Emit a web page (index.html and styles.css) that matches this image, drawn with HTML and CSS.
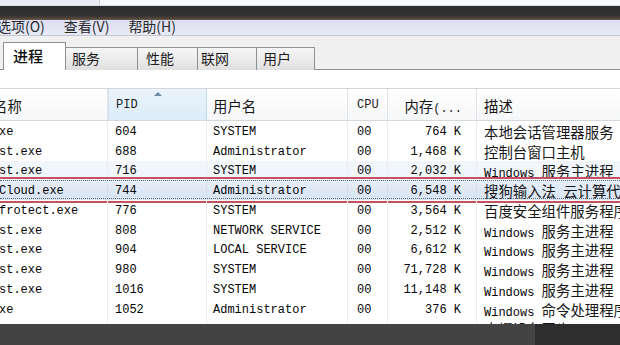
FILE: index.html
```html
<!DOCTYPE html>
<html lang="zh-CN">
<head>
<meta charset="utf-8">
<title>任务管理器</title>
<link rel="stylesheet" href="styles.css">
</head>
<body>
<div class="screen">
  <div class="topstrip"><div class="topbox"></div></div>
  <div class="darkband"></div>
  <div class="window">
    <div class="menubar">
      <span class="menu">选项(O)</span>
      <span class="menu">查看(V)</span>
      <span class="menu">帮助(H)</span>
    </div>
    <div class="tabstrip">
      <div class="tab tab-active tab-proc">进程</div>
      <div class="tab tab-svc">服务</div>
      <div class="tab tab-perf">性能</div>
      <div class="tab tab-net">联网</div>
      <div class="tab tab-user">用户</div>
    </div>
    <div class="panel">
      <div class="listview">
        <div class="lv-head">
          <div class="h h-name"><span class="zh">名称</span></div>
          <div class="h h-pid sorted">PID<span class="sort-arrow"></span></div>
          <div class="h h-user"><span class="zh">用户名</span></div>
          <div class="h h-cpu">CPU</div>
          <div class="h h-mem"><span class="zh">内存</span>(...</div>
          <div class="h h-desc"><span class="zh">描述</span></div>
        </div>

        <div class="row">
          <div class="c c-name">xe</div><div class="c c-pid">604</div><div class="c c-user">SYSTEM</div><div class="c c-cpu">00</div><div class="c c-mem">764 K</div><div class="c c-desc"><span class="zh">本地会话管理器服务</span></div>
        </div>
        <div class="row">
          <div class="c c-name">st.exe</div><div class="c c-pid">688</div><div class="c c-user">Administrator</div><div class="c c-cpu">00</div><div class="c c-mem">1,468 K</div><div class="c c-desc"><span class="zh">控制台窗口主机</span></div>
        </div>
        <div class="row row-hover">
          <div class="c c-name">st.exe</div><div class="c c-pid">716</div><div class="c c-user">SYSTEM</div><div class="c c-cpu">00</div><div class="c c-mem">2,032 K</div><div class="c c-desc">Windows <span class="zh">服务主进程</span></div>
        </div>
        <div class="row row-selected">
          <div class="c c-name">Cloud.exe</div><div class="c c-pid">744</div><div class="c c-user">Administrator</div><div class="c c-cpu">00</div><div class="c c-mem">6,548 K</div><div class="c c-desc"><span class="zh">搜狗输入法</span> <span class="zh">云计算代理</span></div>
          <div class="mark"></div>
        </div>
        <div class="row">
          <div class="c c-name">frotect.exe</div><div class="c c-pid">776</div><div class="c c-user">SYSTEM</div><div class="c c-cpu">00</div><div class="c c-mem">3,564 K</div><div class="c c-desc"><span class="zh">百度安全组件服务程序</span></div>
        </div>
        <div class="row">
          <div class="c c-name">st.exe</div><div class="c c-pid">808</div><div class="c c-user">NETWORK SERVICE</div><div class="c c-cpu">00</div><div class="c c-mem">2,512 K</div><div class="c c-desc">Windows <span class="zh">服务主进程</span></div>
        </div>
        <div class="row">
          <div class="c c-name">st.exe</div><div class="c c-pid">904</div><div class="c c-user">LOCAL SERVICE</div><div class="c c-cpu">00</div><div class="c c-mem">6,612 K</div><div class="c c-desc">Windows <span class="zh">服务主进程</span></div>
        </div>
        <div class="row">
          <div class="c c-name">st.exe</div><div class="c c-pid">980</div><div class="c c-user">SYSTEM</div><div class="c c-cpu">00</div><div class="c c-mem">71,728 K</div><div class="c c-desc">Windows <span class="zh">服务主进程</span></div>
        </div>
        <div class="row">
          <div class="c c-name">st.exe</div><div class="c c-pid">1016</div><div class="c c-user">SYSTEM</div><div class="c c-cpu">00</div><div class="c c-mem">11,148 K</div><div class="c c-desc">Windows <span class="zh">服务主进程</span></div>
        </div>
        <div class="row">
          <div class="c c-name">xe</div><div class="c c-pid">1052</div><div class="c c-user">Administrator</div><div class="c c-cpu">00</div><div class="c c-mem">376 K</div><div class="c c-desc">Windows <span class="zh">命令处理程序</span></div>
        </div>
        <div class="row">
          <div class="c c-name"></div><div class="c c-pid"></div><div class="c c-user"></div><div class="c c-cpu"></div><div class="c c-mem"></div><div class="c c-desc"><span class="zh">索爆设备同步</span></div>
        </div>
      </div>
    </div>
  </div>
  <div class="taskbar"><div class="tb-left"></div><div class="tb-right"></div></div>
</div>
</body>
</html>
```

FILE: styles.css
```css
* { box-sizing: border-box; }

html, body {
  margin: 0;
  padding: 0;
  background: #ffffff;
}

.screen {
  width: 620px;
  height: 345px;
  overflow: hidden;
  display: flex;
  flex-direction: column;
  font-family: "Liberation Mono", "Noto Sans CJK SC", monospace;
  font-size: 12px;
  color: #050505;
}

.zh {
  font-family: "Noto Sans CJK SC", sans-serif;
  font-size: 14.4px;
  color: #161616;
}

/* top strip of the window behind */
.topstrip {
  height: 6px;
  flex: 0 0 6px;
  background: #f6f8fb;
  border-bottom: 1px solid #d7e0ea;
  display: flex;
}
.topbox {
  width: 100px;
  background: #e9eef4;
  border-right: 1px solid #c9d3de;
}

.darkband {
  height: 14px;
  flex: 0 0 14px;
  background: linear-gradient(#2c2c2c, #323232 65%, #4a4038 85%, #6a5a4a 100%);
}

.window {
  height: 304px;
  flex: 0 0 304px;
  overflow: hidden;
  display: flex;
  flex-direction: column;
}

.menubar {
  height: 16px;
  flex: 0 0 16px;
  background: linear-gradient(#dcdff0, #e8eaf6);
  border-bottom: 1px solid #c4c7d2;
  overflow: hidden;
  display: flex;
  gap: 19px;
}
.menu {
  font-family: "Noto Sans CJK SC", sans-serif;
  font-size: 14px;
  line-height: 14px;
  margin-top: -1px;
  color: #2a2a2a;
}
.menu:first-child { margin-left: -3px; }

.tabstrip {
  height: 34px;
  flex: 0 0 34px;
  background: #f0f0f0;
  border-bottom: 1px solid #8e9097;
  display: flex;
  align-items: flex-end;
  padding-left: 3px;
}
.tab {
  height: 23px;
  margin-bottom: -1px;
  border: 1px solid #8e9097;
  border-bottom: none;
  background: linear-gradient(#f6f6f6, #ebebeb 55%, #dfdfdf);
  font-family: "Noto Sans CJK SC", sans-serif;
  font-size: 14px;
  line-height: 21px;
  padding-left: 6px;
  color: #1c1c1c;
  margin-left: -1px;
}
.tab-active {
  height: 28px;
  background: #ffffff;
  font-size: 15px;
  font-weight: 500;
  line-height: 26px;
  padding-left: 9px;
  margin-left: 0;
  position: relative;
  z-index: 1;
  color: #111;
}
.tab-proc { width: 63px; }
.tab-svc  { width: 73px; }
.tab-perf { width: 61px; padding-left: 8px; }
.tab-net  { width: 60px; padding-left: 3px; }
.tab-user { width: 59px; }

.panel {
  flex: 1 1 auto;
  background: #ffffff;
  padding-top: 18px;
}

.listview {
  border-top: 1px solid #d4d6d9;
}

.lv-head,
.row {
  display: grid;
  grid-template-columns: 108px 99px 141px 40px 89px 1fr;
}

.lv-head {
  height: 32px;
  background: linear-gradient(#ffffff, #f6f7f8);
  border-bottom: 1px solid #d6d8db;
}
.h {
  padding-top: 1.5px;
  line-height: 29px;
  white-space: nowrap;
  overflow: hidden;
  border-right: 1px solid #e3e5e8;
  color: #1e1e1e;
}
.h-name { text-indent: -7px; }
.h-pid  { padding-left: 7px; position: relative; }
.h-user { padding-left: 6px; }
.h-cpu  { padding-left: 9px; }
.h-mem  { text-align: right; padding-right: 14px; }
.h-desc { padding-left: 7px; border-right: none; }

.sorted {
  background: linear-gradient(#eaf4fc, #dcecf9);
  border-left: 1px solid #cfe2f2;
  border-right: 1px solid #c3d9ec;
}
.sort-arrow {
  position: absolute;
  left: 45px;
  top: 3px;
  width: 0;
  height: 0;
  border-left: 4px solid transparent;
  border-right: 4px solid transparent;
  border-bottom: 4px solid #6d8aa8;
}

.row {
  height: 19.75px;
  position: relative;
}
.c {
  padding-top: 1.75px;
  line-height: 18px;
  white-space: nowrap;
  overflow: hidden;
  border-right: 1px solid #ededed;
}
.c-name { text-indent: -1px; }
.c-pid  { padding-left: 7px; }
.c-user { padding-left: 6px; }
.c-cpu  { padding-left: 9px; }
.c-mem  { text-align: right; padding-right: 15px; }
.c-desc { padding-left: 7px; border-right: none; }

.row-hover {
  background: #f1f6fc;
}
.row-selected {
  background: linear-gradient(#e6eef8, #d7e4f2);
}
.row-selected .c {
  border-right-color: #d5e0ec;
}
.row-selected::after {
  content: "";
  position: absolute;
  left: 0;
  right: 0;
  top: 0;
  bottom: 1px;
  border-top: 1px dotted #5d6775;
  border-bottom: 1px dotted #5d6775;
  pointer-events: none;
}
.mark {
  position: absolute;
  left: -2px;
  right: -2px;
  top: -3px;
  bottom: -3px;
  border: 2px solid #c4525e;
  pointer-events: none;
}

.taskbar {
  height: 21px;
  flex: 0 0 21px;
  display: flex;
}
.tb-left {
  width: 535px;
  background: #434343;
}
.tb-right {
  flex: 1 1 auto;
  background: #2e2e2e;
}
```
